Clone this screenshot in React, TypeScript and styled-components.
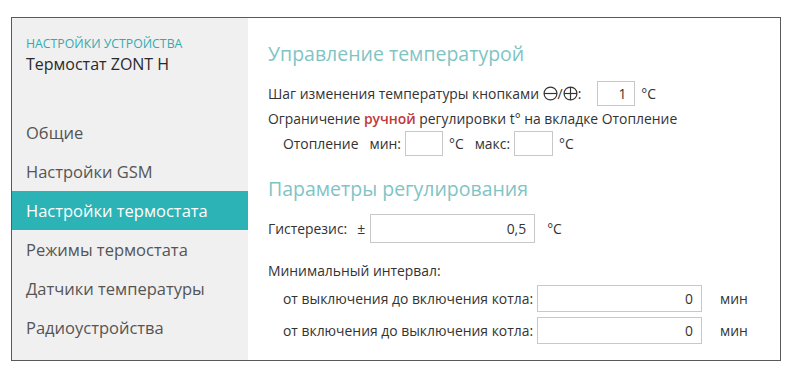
import styled, { createGlobalStyle } from 'styled-components'

const GlobalStyle = createGlobalStyle`
  body {
    margin: 0;
    background: #ffffff;
    font-family: 'Open Sans', 'Noto Sans', sans-serif;
    color: #333333;
  }
`

const menu = [
  'Общие',
  'Настройки GSM',
  'Настройки термостата',
  'Режимы термостата',
  'Датчики температуры',
  'Радиоустройства',
]

function MinusCircle() {
  return (
    <Glyph viewBox='0 0 14 14'>
      <circle cx='7' cy='7' r='6' fill='none' stroke='#333' strokeWidth='1.1' />
      <line x1='1' y1='7' x2='13' y2='7' stroke='#333' strokeWidth='1.1' />
    </Glyph>
  )
}

function PlusCircle() {
  return (
    <Glyph viewBox='0 0 14 14'>
      <circle cx='7' cy='7' r='6' fill='none' stroke='#333' strokeWidth='1.1' />
      <line x1='1' y1='7' x2='13' y2='7' stroke='#333' strokeWidth='1.1' />
      <line x1='7' y1='1' x2='7' y2='13' stroke='#333' strokeWidth='1.1' />
    </Glyph>
  )
}

function App() {
  return (
    <>
      <GlobalStyle />
      <Frame>
        <Sidebar>
          <Caption>НАСТРОЙКИ УСТРОЙСТВА</Caption>
          <DeviceName>Термостат ZONT H</DeviceName>
          <Menu>
            {menu.map((item) => (
              <MenuItem key={item} $active={item === 'Настройки термостата'}>
                {item}
              </MenuItem>
            ))}
          </Menu>
        </Sidebar>
        <Main>
          <Heading>Управление температурой</Heading>
          <Row $top={13}>
            Шаг изменения температуры кнопками&nbsp;
            <MinusCircle />/<PlusCircle />:
            <Field $width={38} $height={25} $left={16}>1</Field>
            <Unit>°C</Unit>
          </Row>
          <Row $top={0}>
            Ограничение&nbsp;<Accent>ручной</Accent>&nbsp;регулировки t° на вкладке Отопление
          </Row>
          <Row $top={0} $indent={15}>
            <span>Отопление</span>
            <Label $left={11}>мин:</Label>
            <Field $width={38} $height={25} $left={4} />
            <Unit>°C</Unit>
            <Label $left={11}>макс:</Label>
            <Field $width={39} $height={25} $left={4} />
            <Unit>°C</Unit>
          </Row>
          <Heading $top={19}>Параметры регулирования</Heading>
          <Row $top={11} $height={29}>
            Гистерезис:
            <Label $left={10}>±</Label>
            <Field $width={165} $height={29} $left={5}>0,5</Field>
            <Unit $left={12}>°C</Unit>
          </Row>
          <Row $top={15}>Минимальный интервал:</Row>
          <IntervalRow $top={2}>
            <IntervalLabel>от выключения до включения котла:</IntervalLabel>
            <Field $width={165} $height={27}>0</Field>
            <Unit $left={18}>мин</Unit>
          </IntervalRow>
          <IntervalRow $top={5}>
            <IntervalLabel>от включения до выключения котла:</IntervalLabel>
            <Field $width={165} $height={27}>0</Field>
            <Unit $left={18}>мин</Unit>
          </IntervalRow>
        </Main>
      </Frame>
    </>
  )
}

const Frame = styled.div`
  display: flex;
  margin: 17px 0 0 11px;
  width: 770px;
  height: 344px;
  box-sizing: border-box;
  border: 1px solid #5a5a5a;
  background: #ffffff;
`

const Sidebar = styled.div`
  width: 236px;
  flex-shrink: 0;
  background: #f0f0f0;
  padding-top: 18px;
  box-sizing: border-box;
`

const Caption = styled.div`
  padding-left: 14px;
  font-size: 12.3px;
  line-height: 16px;
  color: #33a9b0;
`

const DeviceName = styled.div`
  padding-left: 14px;
  font-size: 16px;
  line-height: 24px;
  color: #2a2a2a;
`

const Menu = styled.div`
  margin-top: 37px;
  display: flex;
  flex-direction: column;
`

const MenuItem = styled.div<{ $active?: boolean }>`
  height: 39px;
  display: flex;
  align-items: center;
  padding-left: 14px;
  font-size: 16.5px;
  color: ${(p) => (p.$active ? '#ffffff' : '#555555')};
  background: ${(p) => (p.$active ? '#2bb3b6' : 'transparent')};
`

const Main = styled.div`
  flex: 1;
  padding: 22px 0 0 20px;
`

const Heading = styled.div<{ $top?: number }>`
  margin-top: ${(p) => p.$top ?? 0}px;
  font-size: 19.5px;
  line-height: 28px;
  color: #7fc4c5;
`

const Row = styled.div<{ $top: number; $indent?: number; $height?: number }>`
  display: flex;
  align-items: center;
  margin-top: ${(p) => p.$top}px;
  padding-left: ${(p) => p.$indent ?? 0}px;
  height: ${(p) => p.$height ?? 25}px;
  font-size: 13.9px;
  color: #333333;
  white-space: nowrap;
`

const IntervalRow = styled(Row)`
  padding-left: 15px;
  height: 27px;
`

const IntervalLabel = styled.span`
  width: 254px;
`

const Glyph = styled.svg`
  width: 15px;
  height: 15px;
`

const Accent = styled.span`
  color: #c0393b;
  font-weight: 600;
`

const Label = styled.span<{ $left?: number }>`
  margin-left: ${(p) => p.$left ?? 0}px;
`

const Field = styled.div<{ $width: number; $height: number; $left?: number }>`
  width: ${(p) => p.$width}px;
  height: ${(p) => p.$height}px;
  margin-left: ${(p) => p.$left ?? 0}px;
  box-sizing: border-box;
  border: 1px solid #c8c8c8;
  display: flex;
  align-items: center;
  justify-content: flex-end;
  padding-right: 8px;
  font-size: 13.9px;
  color: #333333;
`

const Unit = styled.span<{ $left?: number }>`
  margin-left: ${(p) => p.$left ?? 6}px;
`

export default App
